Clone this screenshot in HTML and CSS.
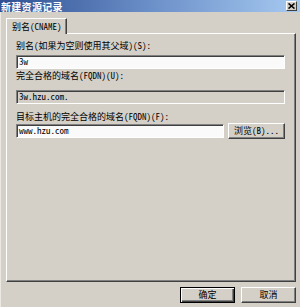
FILE: index.html
```html
<!DOCTYPE html>
<html>
<head>
<meta charset="utf-8">
<link rel="stylesheet" href="styles.css">
</head>
<body>
<div class="window">
  <div class="titlebar">
    <span class="title">新建资源记录</span>
    <span class="close"><svg width="7" height="6" viewBox="0 0 7 6"><path d="M0.5 0.5 L6.5 5.5 M6.5 0.5 L0.5 5.5" stroke="#000" stroke-width="1.6" fill="none"/></svg></span>
  </div>
  <div class="content">
    <div class="tabs"><div class="tab">别名(CNAME)</div></div>
    <div class="panel">
      <div class="lbl l1">别名(如果为空则使用其父域)(S):</div>
      <div class="input">3w</div>
      <div class="lbl l2">完全合格的域名(FQDN)(U):</div>
      <div class="input disabled">3w.hzu.com.</div>
      <div class="lbl l3">目标主机的完全合格的域名(FQDN)(F):</div>
      <div class="row">
        <div class="input grow">www.hzu.com</div>
        <div class="btn browse">浏览(B)...</div>
      </div>
    </div>
    <div class="footer">
      <div class="btn default">确定</div>
      <div class="btn">取消</div>
    </div>
  </div>
</div>
</body>
</html>
```
FILE: styles.css
```css
html, body {
  margin: 0;
  padding: 0;
  background: #d4d0c8;
}
body {
  width: 300px;
  height: 307px;
  overflow: hidden;
  font-family: "Noto Sans Mono CJK SC", "Noto Sans CJK SC", monospace;
  font-size: 9px;
  color: #000;
}
.window {
  width: 300px;
  height: 307px;
  box-sizing: border-box;
  border-left: 1px solid #ece9e2;
  display: flex;
  flex-direction: column;
}
.titlebar {
  height: 12px;
  background: linear-gradient(to right, #2f5193, #6b8fc8 50%, #a6caf0);
  display: flex;
  align-items: center;
  justify-content: space-between;
  margin-left: -1px;
}
.title {
  color: #fff;
  font-family: "Noto Sans CJK SC", sans-serif;
  font-weight: bold;
  font-size: 10px;
  line-height: 12px;
  padding-left: 1px;
  margin-top: 2px;
  letter-spacing: 0.3px;
}
.close {
  width: 11px;
  height: 10px;
  box-sizing: border-box;
  margin-right: 3px;
  background: #d4d0c8;
  border-top: 1px solid #fff;
  border-left: 1px solid #fff;
  border-right: 1px solid #404040;
  border-bottom: 1px solid #404040;
  display: flex;
  align-items: center;
  justify-content: center;
}
.content {
  flex: 1;
  padding: 6px 4px 0 5px;
  display: flex;
  flex-direction: column;
}
.tabs {
  display: flex;
  height: 15px;
}
.tab {
  width: 61px;
  box-sizing: border-box;
  border-top: 1px solid #fff;
  border-left: 1px solid #fff;
  border-right: 1px solid #404040;
  box-shadow: inset -1px 0 #808080;
  padding-left: 5px;
  line-height: 14px;
  padding-top: 1px;
  position: relative;
  z-index: 1;
  background: #d4d0c8;
  margin-bottom: -1px;
}
.panel {
  height: 249px;
  box-sizing: border-box;
  border-top: 1px solid #fff;
  border-left: 1px solid #fff;
  border-right: 1px solid #404040;
  border-bottom: 1px solid #404040;
  box-shadow: inset -1px -1px #808080;
  padding: 6px 10px 0 9px;
  display: flex;
  flex-direction: column;
}
.lbl {
  line-height: 12px;
  height: 12px;
  white-space: nowrap;
}
.l1 { margin-bottom: 3px; }
.l2 { margin-top: 1px; margin-bottom: 8px; }
.l3 { margin-top: 7px; }
.input {
  height: 14px;
  box-sizing: border-box;
  background: #fafafa;
  border-top: 1px solid #808080;
  border-left: 1px solid #808080;
  border-right: 1px solid #fff;
  border-bottom: 1px solid #fff;
  box-shadow: inset 1px 1px #404040;
  line-height: 12px;
  padding-left: 2px;
  white-space: nowrap;
}
.input.disabled {
  background: #d4d0c8;
}
.row {
  display: flex;
  align-items: flex-start;
  gap: 4px;
}
.grow {
  flex: 1;
  margin-top: 1px;
}
.btn {
  height: 16px;
  box-sizing: border-box;
  border-top: 1px solid #fff;
  border-left: 1px solid #fff;
  border-right: 1px solid #404040;
  border-bottom: 1px solid #404040;
  box-shadow: inset -1px -1px #808080;
  display: flex;
  align-items: center;
  justify-content: center;
  line-height: 12px;
}
.browse {
  width: 57px;
}
.footer {
  display: flex;
  justify-content: flex-end;
  gap: 6px;
  margin-top: 5px;
}
.footer .btn {
  width: 55px;
}
.footer .btn.default {
  border: 1px solid #000;
  box-shadow: inset 1px 1px #fff, inset -1px -1px #404040, inset -2px -2px #808080;
}
```
